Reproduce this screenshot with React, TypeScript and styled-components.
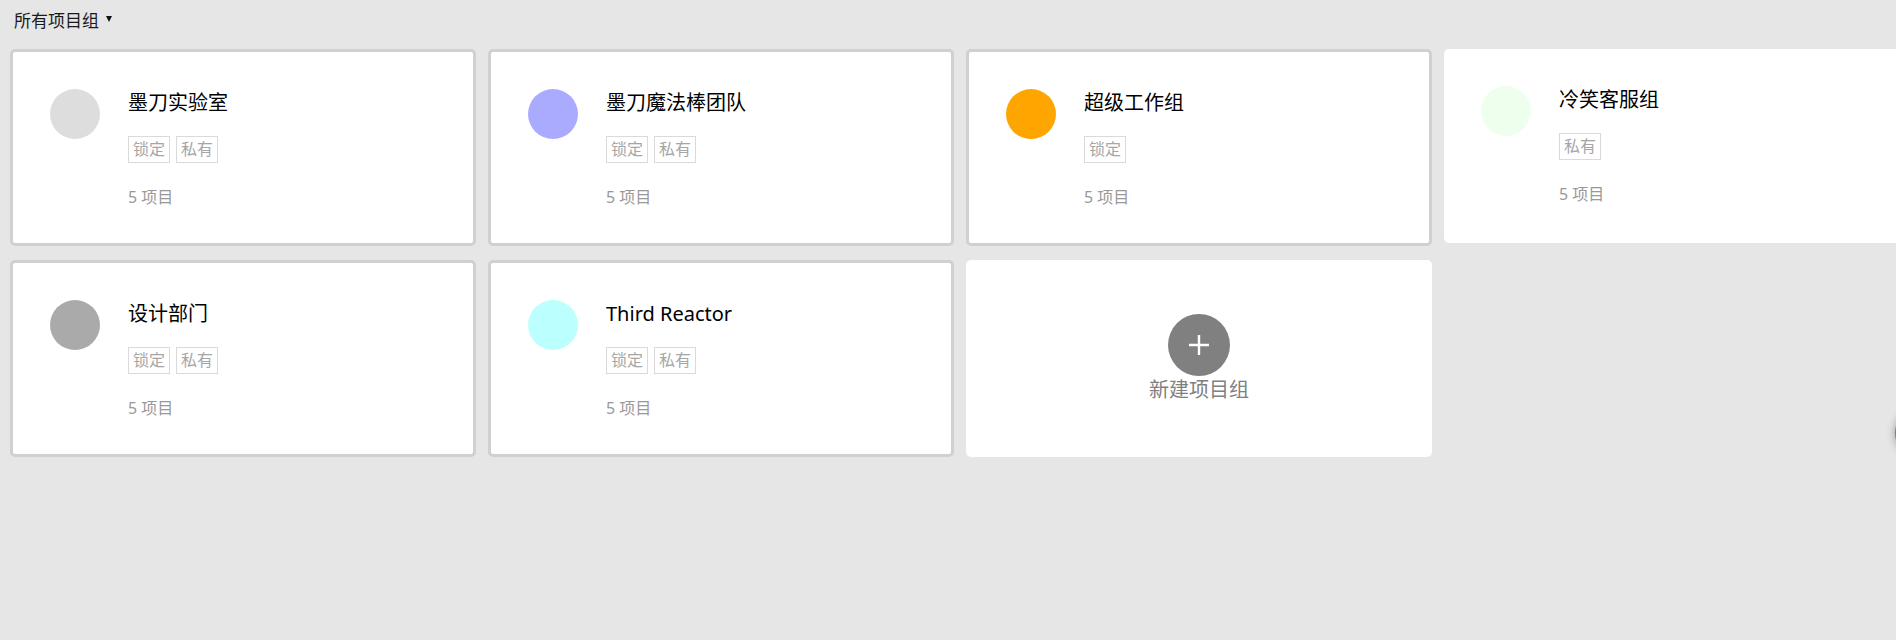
import styled, { createGlobalStyle } from 'styled-components';

const GlobalStyle = createGlobalStyle`
  html, body {
    margin: 0;
    padding: 0;
    background: #e6e6e6;
    overflow: hidden;
    font-family: 'Noto Sans', 'Noto Sans CJK SC', sans-serif;
  }
`;

const Page = styled.div`
  padding: 10px;
  min-height: 620px;
`;

const Header = styled.div`
  display: flex;
  align-items: center;
  height: 22px;
  padding-left: 4px;
  margin-bottom: 17px;
  font-size: 17px;
  line-height: 22px;
  color: #1a1a1a;
`;

const Caret = styled.span`
  width: 0;
  height: 0;
  margin-left: 7px;
  margin-top: -5px;
  border-left: 3.5px solid transparent;
  border-right: 3.5px solid transparent;
  border-top: 6px solid #111;
`;

const Grid = styled.div`
  display: grid;
  grid-template-columns: repeat(4, 466px);
  column-gap: 12px;
  row-gap: 14px;
  align-items: start;
`;

const Card = styled.div<{ $plain?: boolean }>`
  box-sizing: border-box;
  display: flex;
  align-items: flex-start;
  gap: 28px;
  height: ${(p) => (p.$plain ? '194px' : '197px')};
  padding: 37px;
  background: #fff;
  border: ${(p) => (p.$plain ? 'none' : '3px solid #d0d0d0')};
  border-radius: 5px;
`;

const Avatar = styled.div<{ $color: string }>`
  flex: none;
  width: 50px;
  height: 50px;
  border-radius: 50%;
  background: ${(p) => p.$color};
`;

const Info = styled.div`
  display: flex;
  flex-direction: column;
`;

const Title = styled.div`
  font-size: 20px;
  line-height: 28px;
  color: #000;
`;

const Tags = styled.div`
  display: flex;
  gap: 6px;
  margin-top: 19px;
`;

const Tag = styled.span`
  box-sizing: border-box;
  height: 27px;
  padding: 0 4px;
  border: 1px solid #dadada;
  font-size: 16px;
  line-height: 25px;
  color: #a6a6a6;
`;

const Count = styled.div`
  margin-top: 22px;
  font-size: 16px;
  line-height: 24px;
  color: #999;
`;

const NewCard = styled.div`
  box-sizing: border-box;
  height: 197px;
  display: flex;
  flex-direction: column;
  align-items: center;
  justify-content: center;
  background: #fff;
  border-radius: 5px;
`;

const PlusCircle = styled.div`
  width: 62px;
  height: 62px;
  border-radius: 50%;
  background: #808080;
  display: flex;
  align-items: center;
  justify-content: center;
`;

const NewLabel = styled.div`
  font-size: 20px;
  line-height: 28px;
  color: #808080;
`;

const EdgeButton = styled.div`
  position: fixed;
  top: 409px;
  right: -47px;
  width: 48px;
  height: 48px;
  border-radius: 50%;
  background: #777;
  box-shadow: 0 0 8px rgba(0, 0, 0, 0.35);
`;

type Group = {
  name: string;
  color: string;
  tags: string[];
  count: number;
  plain?: boolean;
};

const groups: Group[] = [
  { name: '墨刀实验室', color: '#dddddd', tags: ['锁定', '私有'], count: 5 },
  { name: '墨刀魔法棒团队', color: '#aaaaff', tags: ['锁定', '私有'], count: 5 },
  { name: '超级工作组', color: '#ffa500', tags: ['锁定'], count: 5 },
  { name: '冷笑客服组', color: '#eeffee', tags: ['私有'], count: 5, plain: true },
  { name: '设计部门', color: '#aaaaaa', tags: ['锁定', '私有'], count: 5 },
  { name: 'Third Reactor', color: '#bbffff', tags: ['锁定', '私有'], count: 5 },
];

function App() {
  return (
    <Page>
      <GlobalStyle />
      <Header>
        所有项目组
        <Caret />
      </Header>
      <Grid>
        {groups.map((g) => (
          <Card key={g.name} $plain={g.plain}>
            <Avatar $color={g.color} />
            <Info>
              <Title>{g.name}</Title>
              <Tags>
                {g.tags.map((t) => (
                  <Tag key={t}>{t}</Tag>
                ))}
              </Tags>
              <Count>{g.count} 项目</Count>
            </Info>
          </Card>
        ))}
        <NewCard>
          <PlusCircle>
            <svg width="22" height="22" viewBox="0 0 22 22">
              <path d="M11 1v20M1 11h20" stroke="#fff" strokeWidth="2.4" />
            </svg>
          </PlusCircle>
          <NewLabel>新建项目组</NewLabel>
        </NewCard>
      </Grid>
      <EdgeButton />
    </Page>
  );
}

export default App;
